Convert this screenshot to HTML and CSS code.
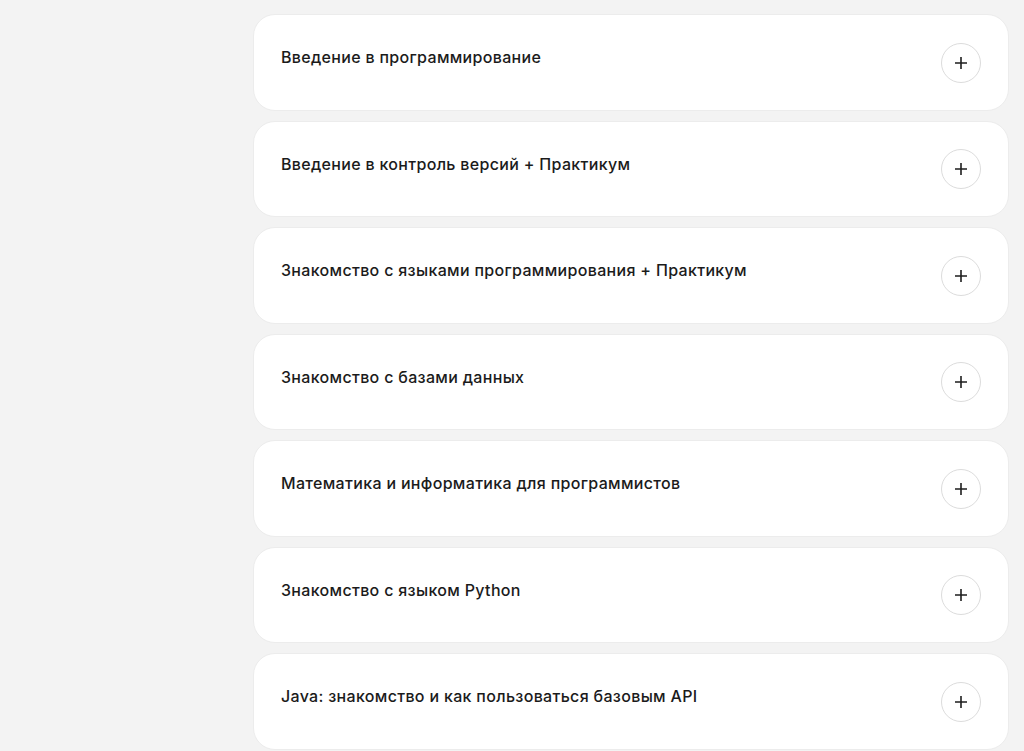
FILE: index.html
```html
<!DOCTYPE html>
<html lang="ru">
<head>
    <meta charset="UTF-8">
    <meta name="viewport" content="width=device-width, initial-scale=1.0">
    <title>Программа курса</title>
    <link rel="stylesheet" href="styles.css">
</head>
<body>
    <div class="page">
        <div class="modules">
            <div class="module">
                <div class="module-title">Введение в программирование</div>
                <button class="toggle"><svg viewBox="0 0 14 14"><path d="M7 1v12M1 7h12"/></svg></button>
            </div>
            <div class="module">
                <div class="module-title">Введение в контроль версий + Практикум</div>
                <button class="toggle"><svg viewBox="0 0 14 14"><path d="M7 1v12M1 7h12"/></svg></button>
            </div>
            <div class="module">
                <div class="module-title">Знакомство с языками программирования + Практикум</div>
                <button class="toggle"><svg viewBox="0 0 14 14"><path d="M7 1v12M1 7h12"/></svg></button>
            </div>
            <div class="module">
                <div class="module-title">Знакомство с базами данных</div>
                <button class="toggle"><svg viewBox="0 0 14 14"><path d="M7 1v12M1 7h12"/></svg></button>
            </div>
            <div class="module">
                <div class="module-title">Математика и информатика для программистов</div>
                <button class="toggle"><svg viewBox="0 0 14 14"><path d="M7 1v12M1 7h12"/></svg></button>
            </div>
            <div class="module">
                <div class="module-title">Знакомство с языком Python</div>
                <button class="toggle"><svg viewBox="0 0 14 14"><path d="M7 1v12M1 7h12"/></svg></button>
            </div>
            <div class="module">
                <div class="module-title">Java: знакомство и как пользоваться базовым API</div>
                <button class="toggle"><svg viewBox="0 0 14 14"><path d="M7 1v12M1 7h12"/></svg></button>
            </div>
        </div>
    </div>
</body>
</html>
```

FILE: styles.css
```css
body {
    margin: 0;
    padding: 0;
    background-color: #f3f3f3;
    font-family: Inter, "Noto Sans", sans-serif;
    color: #1b1b1b;
}
.page {
    padding: 14px 15px 0 253px;
    height: 751px;
    overflow: hidden;
    box-sizing: border-box;
}
.modules {
    width: 756px;
    display: flex;
    flex-direction: column;
    gap: 10px;
}
.module {
    background-color: #fff;
    border: 1px solid #ececec;
    border-radius: 22px;
    height: 96.5px;
    flex-shrink: 0;
    box-sizing: border-box;
    padding: 30px 27px 0 27px;
    display: flex;
    justify-content: space-between;
    align-items: flex-start;
}
.module-title {
    font-size: 16px;
    font-weight: 500;
    line-height: 24px;
    letter-spacing: 0.32px;
}
.toggle {
    width: 40px;
    height: 40px;
    margin-top: -2.5px;
    border: 1px solid #dcdcdc;
    border-radius: 50%;
    background: #fff;
    padding: 0;
    display: flex;
    align-items: center;
    justify-content: center;
}
.toggle svg {
    width: 14px;
    height: 14px;
    stroke: #1e1e1e;
    stroke-width: 1.6;
    fill: none;
}
```
